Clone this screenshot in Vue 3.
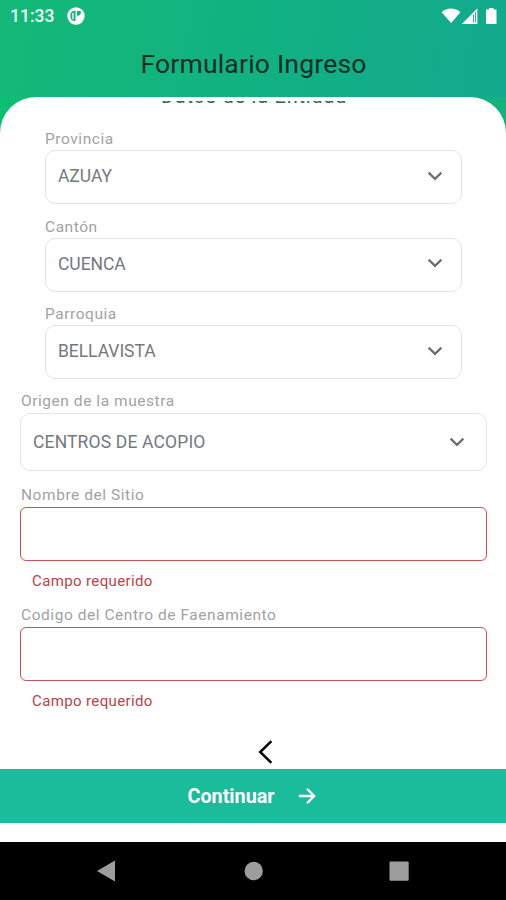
<script setup>
const fields = [
  { label: 'Provincia', value: 'AZUAY', kind: 'inset' },
  { label: 'Cantón', value: 'CUENCA', kind: 'inset' },
  { label: 'Parroquia', value: 'BELLAVISTA', kind: 'inset' },
  { label: 'Origen de la muestra', value: 'CENTROS DE ACOPIO', kind: 'wide' },
  { label: 'Nombre del Sitio', error: 'Campo requerido', kind: 'text' },
  { label: 'Codigo del Centro de Faenamiento', error: 'Campo requerido', kind: 'text' },
]
</script>

<template>
  <div class="screen">
    <header class="top">
      <div class="status">
        <span class="clock">11:33</span>
        <svg class="badge" width="18" height="18" viewBox="0 0 18 18">
          <circle cx="9" cy="9" r="8.7" fill="#fff" />
          <path d="M8.500 3.600v10.600C5 14.200 3.300 12 3.300 9S5 3.700 8.500 3.600z" fill="#14b37e" />
          <path d="M6 6v6.300" stroke="#fff" stroke-width="1.300" />
          <path d="M10 4h3.800v2.100c0 1.700-1.500 2.700-3.800 2.700z" fill="#14b37e" />
        </svg>
        <svg class="signals" width="58" height="18" viewBox="0 0 58 18">
          <path d="M.6 5.200C5.800.2 14.200.2 19.400 5.200L10.200 16z" fill="#fff" />
          <path d="M36.400 1.200V17H20.900z" fill="#fff" />
          <path d="M32.500 7.500v8M34.500 15.200V5" stroke="#12ad89" stroke-width="0.900" />
          <path d="M45 2.600h3V1h4.500v1.600h3V17H45z" fill="#fff" />
        </svg>
      </div>
      <h1>Formulario Ingreso</h1>
    </header>
    <main class="sheet">
      <div class="clip"><h2>Datos de la Entidad</h2></div>
      <div class="form">
        <section v-for="f in fields" :key="f.label" class="field" :class="f.kind">
          <label>{{ f.label }}</label>
          <div class="box">
            <span>{{ f.value }}</span>
            <svg v-if="f.value" width="16" height="10" viewBox="0 0 16 10">
              <path d="M1.600 1.700L8 7.900l6.400-6.200" fill="none" stroke="#6b7078" stroke-width="2.300" />
            </svg>
          </div>
          <p v-if="f.error">{{ f.error }}</p>
        </section>
      </div>
      <div class="back">
        <svg width="16" height="24" viewBox="0 0 16 24">
          <path d="M13.400 1.200L2.200 12l11.200 10.800" fill="none" stroke="#080808" stroke-width="2.500" />
        </svg>
      </div>
    </main>
    <button class="next">
      <span>Continuar</span>
      <svg width="18" height="18" viewBox="0 0 18 18">
        <path d="M.800 9h15M9 1.800L16.200 9 9 16.200" fill="none" stroke="#fff" stroke-width="2.300" />
      </svg>
    </button>
    <nav class="nav">
      <svg width="506" height="58" viewBox="0 0 506 58" fill="#9d9d9d">
        <path d="M97 29l18-10.500v21z" />
        <circle cx="253.700" cy="29" r="9.200" />
        <rect x="389.500" y="19.500" width="19.200" height="19.200" rx="1" />
      </svg>
    </nav>
  </div>
</template>

<style>
body { margin: 0; }
</style>

<style scoped>
.screen {
  width: 506px;
  height: 900px;
  display: flex;
  flex-direction: column;
  overflow: hidden;
  background: #fff;
  font-family: Roboto, sans-serif;
}
.top {
  height: 97px;
  flex: none;
  background: linear-gradient(100deg, #14b978 0%, #12b280 45%, #12a98e 100%);
}
.status {
  height: 32px;
  display: flex;
  align-items: center;
  padding: 0 7px 0 10px;
  box-sizing: border-box;
}
.clock { font-size: 17.500px; font-weight: 500; color: #effff8; width: 57px; }
.signals { margin-left: auto; }
h1 {
  margin: 0;
  height: 65px;
  line-height: 64px;
  padding-left: 1px;
  text-align: center;
  font-size: 26.500px;
  font-weight: 400;
  color: #092e25;
  letter-spacing: 0.200px;
}
.sheet {
  position: relative;
  height: 672px;
  flex: none;
  background: linear-gradient(90deg, #0cc073, #12b17e);
}
.sheet::before {
  content: '';
  position: absolute;
  inset: 0;
  border-radius: 36px 36px 0 0;
  background: #fff;
}
.clip { position: relative; height: 31px; padding-top: 4px; box-sizing: border-box; }
.clip h2 {
  margin: 0;
  height: 3px;
  overflow: hidden;
  display: flex;
  align-items: flex-end;
  justify-content: center;
  font-size: 20px;
  font-weight: 400;
  line-height: 16px;
  letter-spacing: 0.750px;
  padding-left: 2px;
  color: #47565a;
}
.form { position: relative; height: 603px; }
.field { height: 87.500px; margin: 0 19px 0 20px; }
.inset { margin: 0 44px 0 45px; }
label {
  display: block;
  height: 22px;
  line-height: 22px;
  font-size: 15.500px;
  letter-spacing: 0.550px;
  color: #a2a2a2;
}
.wide label, .text label { padding-left: 1px; line-height: 21px; }
.box {
  height: 54px;
  box-sizing: border-box;
  border: 1.500px solid #e3e4e5;
  border-radius: 10px;
  display: flex;
  align-items: center;
  justify-content: space-between;
  padding: 0 18px 3px 12px;
  font-size: 17.500px;
  letter-spacing: -0.050px;
  color: #747980;
}
.inset .box span { padding-top: 1px; }
.wide { height: 94.500px; }
.wide .box { height: 58px; padding: 0 21px 0 12px; letter-spacing: 0.150px; }
.text { height: 119.500px; }
.text .box { border-color: #c75355; border-radius: 6px; }
p {
  margin: 0;
  padding: 10px 0 0 12px;
  line-height: 20px;
  font-size: 15px;
  letter-spacing: 0.370px;
  color: #bd4148;
}
.back {
  position: relative;
  display: flex;
  justify-content: center;
  padding: 9px 0 0 25px;
}
.next {
  height: 54px;
  flex: none;
  border: 0;
  padding: 0 3px 0 0;
  background: #1abc9c;
  color: #fff;
  display: flex;
  align-items: center;
  justify-content: center;
  gap: 23px;
  font: 700 19.800px Roboto, sans-serif;
}
.nav { height: 58px; margin-top: 19px; flex: none; background: #000; }
.nav svg { display: block; }
</style>
